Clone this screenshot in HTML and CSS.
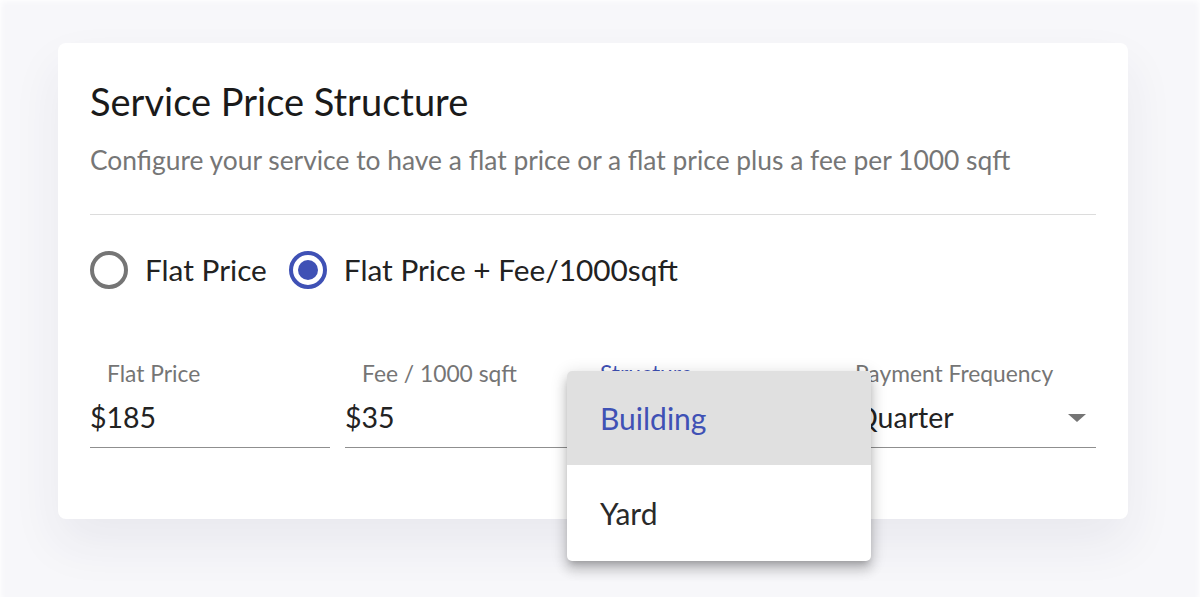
FILE: index.html
```html
<!DOCTYPE html>
<html>
<head>
<meta charset="utf-8">
<link rel="stylesheet" href="styles.css">
</head>
<body>
<div class="backdrop">
  <div class="card">
    <h1 class="title">Service Price Structure</h1>
    <p class="subtitle">Configure your service to have a flat price or a flat price plus a fee per 1000 sqft</p>
    <div class="divider"></div>
    <div class="radios">
      <label class="radio"><span class="radio-circle"></span><span class="radio-text">Flat Price</span></label>
      <label class="radio checked"><span class="radio-circle"><span class="radio-dot"></span></span><span class="radio-text">Flat Price + Fee/1000sqft</span></label>
    </div>
    <div class="fields">
      <div class="field">
        <div class="field-label indent">Flat Price</div>
        <div class="field-value">$185</div>
      </div>
      <div class="field">
        <div class="field-label indent">Fee / 1000 sqft</div>
        <div class="field-value">$35</div>
      </div>
      <div class="field">
        <div class="field-label focused">Structure</div>
        <div class="field-value">&nbsp;</div>
        <div class="menu">
          <div class="menu-item selected">Building</div>
          <div class="menu-item">Yard</div>
        </div>
      </div>
      <div class="field">
        <div class="field-label">Payment Frequency</div>
        <div class="field-value select">Quarter<span class="arrow"></span></div>
      </div>
    </div>
  </div>
</div>
</body>
</html>
```
FILE: styles.css
```css
* { box-sizing: border-box; }
html, body { margin: 0; padding: 0; background: #ffffff; }
body { font-family: "Lato", "Open Sans", sans-serif; color: #212121; }
.backdrop {
  margin: 5px 5px 0 5px;
  height: 592px;
  background: #f7f7fa;
  padding: 38px 67px 0 53px;
  box-shadow: 0 0 6px 4px #f7f7fa;
}
.card {
  background: #ffffff;
  border-radius: 8px;
  height: 476px;
  padding: 36px 32px 0 32px;
  box-shadow: 0 24px 50px rgba(40, 40, 90, 0.07);
}
.title {
  margin: 0;
  font-size: 38px;
  line-height: 44px;
  font-weight: 400;
  color: #1a1a1a;
}
.subtitle {
  margin: 22px 0 0 0;
  font-size: 26.4px;
  line-height: 30px;
  color: #767676;
  white-space: nowrap;
}
.divider {
  margin-top: 39px;
  height: 1px;
  background: #dcdcdc;
}
.radios {
  display: flex;
  align-items: center;
  gap: 22px;
  margin-top: 36px;
}
.radio { display: flex; align-items: center; gap: 17px; }
.radio-circle {
  width: 38px; height: 38px;
  border: 4px solid #757575;
  border-radius: 50%;
  display: flex; align-items: center; justify-content: center;
}
.radio.checked .radio-circle { border-color: #3f51b5; }
.radio-dot { width: 20px; height: 20px; border-radius: 50%; background: #3f51b5; }
.radio-text { font-size: 29.8px; line-height: 38px; color: #222; }
.fields {
  display: flex;
  gap: 15px;
  margin-top: 71px;
}
.field { position: relative; width: 240px; }
.field:last-child { width: 241px; }
.field-label {
  font-size: 22.8px;
  line-height: 26px;
  color: #757575;
  white-space: nowrap;
}
.field-label.indent { padding-left: 17px; }
.field-label.focused { color: #3f51b5; }
.field-value {
  margin-top: 12px;
  font-size: 28.5px;
  line-height: 38px;
  padding-bottom: 11px;
  border-bottom: 1.5px solid #8f8f8f;
  color: #222;
  position: relative;
}
.arrow {
  position: absolute;
  right: 10px; top: 16px;
  width: 0; height: 0;
  border-left: 9px solid transparent;
  border-right: 9px solid transparent;
  border-top: 8px solid #757575;
}
.menu {
  position: absolute;
  left: -33px;
  top: 11px;
  width: 304px;
  background: #fff;
  border-radius: 5px;
  box-shadow: 0 5px 6px -3px rgba(0,0,0,.2), 0 9px 12px 1px rgba(0,0,0,.14), 0 3px 16px 2px rgba(0,0,0,.12);
  overflow: hidden;
  z-index: 5;
}
.menu-item {
  height: 96px;
  padding-left: 33px;
  display: flex;
  align-items: center;
  font-size: 30px;
  color: #2a2a2a;
}
.menu-item.selected { background: #e0e0e0; color: #3f51b5; height: 94px; }
```
